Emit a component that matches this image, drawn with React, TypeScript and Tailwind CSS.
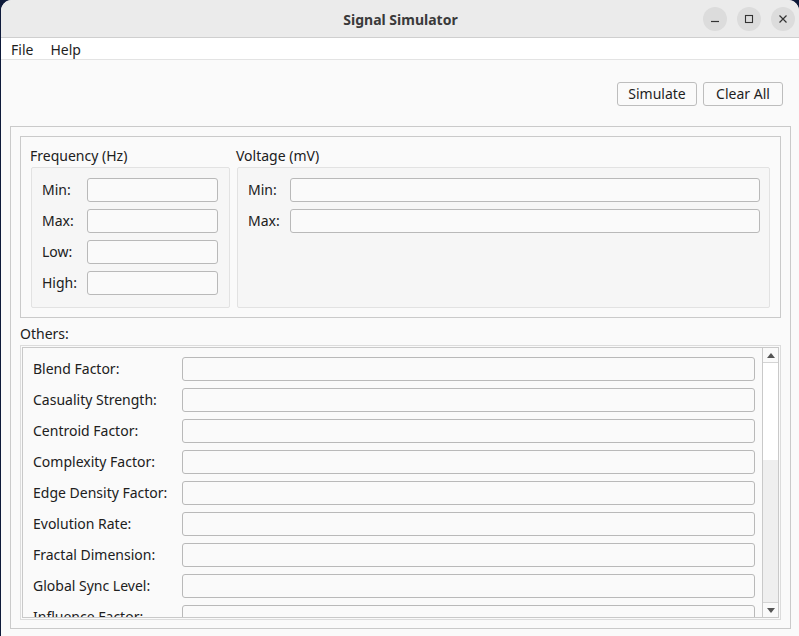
import React from "react";

const font = { fontFamily: '"Noto Sans", "Open Sans", sans-serif' };

function Field({ className = "" }: { className?: string }) {
  return <div className={`h-[24px] rounded-[3px] border border-[#b9b9b9] bg-[#fafafa] ${className}`} />;
}

function Row({ label, labelW, inputW }: { label: string; labelW: string; inputW: string }) {
  return (
    <div className="flex items-center h-[24px]">
      <div className={`${labelW} text-[14px] text-[#202020] leading-none whitespace-nowrap`}>{label}</div>
      <Field className={inputW} />
    </div>
  );
}

const others = [
  "Blend Factor:",
  "Casuality Strength:",
  "Centroid Factor:",
  "Complexity Factor:",
  "Edge Density Factor:",
  "Evolution Rate:",
  "Fractal Dimension:",
  "Global Sync Level:",
  "Influence Factor:",
];

export default function App() {
  return (
    <div className="w-[799px] h-[636px] bg-[#0e1a3a] overflow-hidden" style={font}>
      <div className="ml-[1px] h-full rounded-t-[11px] bg-[#fafafa] flex flex-col overflow-hidden">
        {/* Title bar */}
        <div className="h-[38px] shrink-0 bg-[#ebebeb] border-b border-[#cfcfcf] grid grid-cols-[1fr_auto_1fr] items-center">
          <div />
          <div className="text-[14px] font-bold text-[#3a3a3a] pl-[1px] pt-[1px]">Signal Simulator</div>
          <div className="flex justify-end items-center gap-[10px] pr-[4px]">
            <div className="w-[24px] h-[24px] rounded-full bg-[#dcdcdc] flex items-center justify-center">
              <svg width="10" height="10" viewBox="0 0 10 10"><path d="M1 7.5h8" stroke="#333" strokeWidth="1.2" /></svg>
            </div>
            <div className="w-[24px] h-[24px] rounded-full bg-[#dcdcdc] flex items-center justify-center">
              <svg width="10" height="10" viewBox="0 0 10 10"><rect x="1.5" y="1.5" width="7" height="7" fill="none" stroke="#333" strokeWidth="1.1" /></svg>
            </div>
            <div className="w-[24px] h-[24px] rounded-full bg-[#dcdcdc] flex items-center justify-center">
              <svg width="10" height="10" viewBox="0 0 10 10"><path d="M1.5 1.5l7 7M8.5 1.5l-7 7" stroke="#333" strokeWidth="1.2" /></svg>
            </div>
          </div>
        </div>
        {/* Menu bar */}
        <div className="h-[22px] shrink-0 bg-white border-b border-[#e3e3e3] flex items-center gap-[17px] pl-[10px] pt-[2px] text-[14px] text-[#1e1e1e]">
          <span>File</span>
          <span>Help</span>
        </div>
        {/* Toolbar */}
        <div className="h-[66px] shrink-0 flex items-end justify-end gap-[6px] pr-[16px] pb-[20px]">
          <button className="w-[80px] h-[24px] rounded-[3px] border border-[#bdbdbd] bg-[#fafafa] text-[14px] text-[#1e1e1e] leading-none">Simulate</button>
          <button className="w-[80px] h-[24px] rounded-[3px] border border-[#bdbdbd] bg-[#fafafa] text-[14px] text-[#1e1e1e] leading-none">Clear All</button>
        </div>
        {/* Outer group */}
        <div className="ml-[9px] mr-[8px] h-[503px] border border-[#cacaca] flex flex-col px-[9px] pt-[9px] pb-[8px]">
          {/* Top frame */}
          <div className="h-[182px] shrink-0 border border-[#cacaca] flex gap-[7px] px-[10px] pb-[9px]">
            <div className="w-[199px] flex flex-col">
              <div className="h-[30px] flex items-center pt-[6px] text-[14px] text-[#202020] -ml-[1px]">Frequency (Hz)</div>
              <div className="flex-1 bg-[#f6f6f6] border border-[#e2e2e2] rounded-[2px] pl-[10px] pt-[10px] flex flex-col gap-[7px]">
                <Row label="Min:" labelW="w-[45px]" inputW="w-[131px]" />
                <Row label="Max:" labelW="w-[45px]" inputW="w-[131px]" />
                <Row label="Low:" labelW="w-[45px]" inputW="w-[131px]" />
                <Row label="High:" labelW="w-[45px]" inputW="w-[131px]" />
              </div>
            </div>
            <div className="flex-1 flex flex-col">
              <div className="h-[30px] flex items-center pt-[6px] text-[14px] text-[#202020] -ml-[1px]">Voltage (mV)</div>
              <div className="flex-1 bg-[#f6f6f6] border border-[#e2e2e2] rounded-[2px] pl-[10px] pt-[10px] flex flex-col gap-[7px]">
                <Row label="Min:" labelW="w-[42px]" inputW="w-[470px]" />
                <Row label="Max:" labelW="w-[42px]" inputW="w-[470px]" />
              </div>
            </div>
          </div>
          {/* Others */}
          <div className="h-[27px] shrink-0 flex items-center pt-[3px] text-[14px] text-[#202020]">Others:</div>
          <div className="flex-1 min-h-0 border border-[#dcdcdc] p-[1px]">
            <div className="h-full border border-[#c9c9c9] flex">
              <div className="flex-1 overflow-hidden pl-[10px] pt-[9px] pr-[7px] flex flex-col gap-[7px]">
                {others.map((o) => (
                  <div key={o} className="flex items-center h-[24px] shrink-0">
                    <div className="w-[149px] text-[14px] text-[#202020] whitespace-nowrap leading-none">{o}</div>
                    <Field className="flex-1" />
                  </div>
                ))}
              </div>
              <div className="w-[16px] shrink-0 border-l border-[#c9c9c9] flex flex-col">
                <div className="h-[15px] shrink-0 border-b border-[#d4d4d4] bg-[#fafafa] flex items-center justify-center">
                  <svg width="8" height="5" viewBox="0 0 8 5"><path d="M0 5L4 0L8 5Z" fill="#555" /></svg>
                </div>
                <div className="h-[97px] shrink-0 bg-white" />
                <div className="flex-1 bg-[#efefef]" />
                <div className="h-[15px] shrink-0 border-t border-[#d4d4d4] bg-[#fafafa] flex items-center justify-center">
                  <svg width="8" height="5" viewBox="0 0 8 5"><path d="M0 0L8 0L4 5Z" fill="#555" /></svg>
                </div>
              </div>
            </div>
          </div>
        </div>
      </div>
    </div>
  );
}
